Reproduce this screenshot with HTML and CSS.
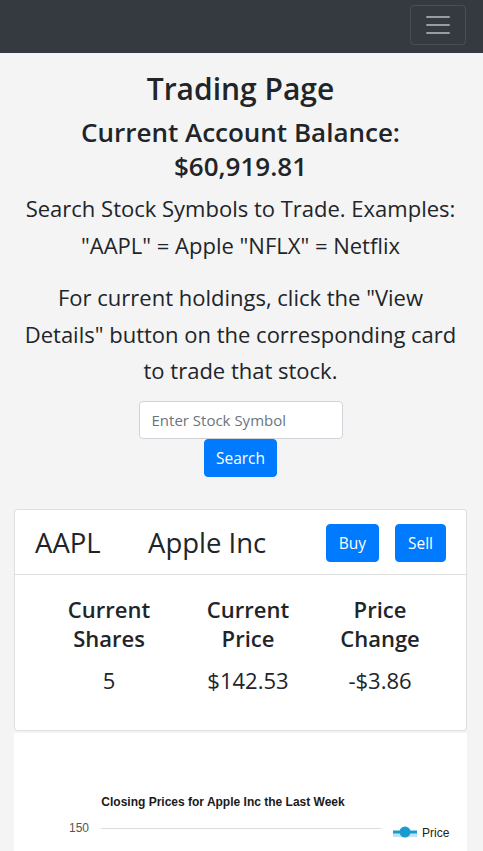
FILE: index.html
```html
<!DOCTYPE html>
<html lang="en">
<head>
<meta charset="utf-8">
<title>Trading Page</title>
<link rel="stylesheet" href="styles.css">
</head>
<body>
<nav class="navbar">
  <button class="toggler" aria-label="Toggle navigation">
    <svg width="30" height="30" viewBox="0 0 30 30"><path d="M4 7h22M4 15h22M4 23h22" stroke="rgba(255,255,255,0.5)" stroke-width="2" stroke-linecap="round" fill="none"/></svg>
  </button>
</nav>
<main class="main">
  <h1 class="title">Trading Page</h1>
  <h3 class="balance">Current Account Balance: $60,919.81</h3>
  <p class="lead">Search Stock Symbols to Trade. Examples: "AAPL" = Apple "NFLX" = Netflix</p>
  <p class="lead lead-2">For current holdings, click the "View Details" button on the corresponding card to trade that stock.</p>
  <form class="search">
    <input class="input" type="text" placeholder="Enter Stock Symbol">
    <button class="btn btn-search" type="button">Search</button>
  </form>

  <section class="card">
    <div class="card-header">
      <span class="sym">AAPL</span>
      <span class="name">Apple Inc</span>
      <div class="actions">
        <button class="btn" type="button">Buy</button>
        <button class="btn" type="button">Sell</button>
      </div>
    </div>
    <div class="card-body">
      <div class="stat">
        <h4 class="stat-label">Current Shares</h4>
        <div class="stat-value">5</div>
      </div>
      <div class="stat">
        <h4 class="stat-label">Current Price</h4>
        <div class="stat-value">$142.53</div>
      </div>
      <div class="stat">
        <h4 class="stat-label">Price Change</h4>
        <div class="stat-value">-$3.86</div>
      </div>
    </div>
  </section>

  <section class="chart">
    <svg class="chart-svg" width="453" height="130" viewBox="0 0 453 130">
      <text x="209" y="73" text-anchor="middle" class="chart-title">Closing Prices for Apple Inc the Last Week</text>
      <text x="75" y="99" text-anchor="end" class="axis">150</text>
      <line x1="87" y1="95.5" x2="367" y2="95.5" stroke="#dcdcdc" stroke-width="1"/>
      <rect x="379" y="100" width="24" height="4" fill="#bfe3f2"/>
      <line x1="379" y1="99" x2="403" y2="99" stroke="#1a9bd0" stroke-width="3"/>
      <circle cx="391" cy="99" r="5.5" fill="#1a9bd0"/>
      <text x="408" y="104" class="legend">Price</text>
    </svg>
  </section>
</main>
</body>
</html>
```
FILE: styles.css
```css
* { box-sizing: border-box; }
html, body { margin: 0; padding: 0; }
body {
  background: #f4f4f4;
  color: #212529;
  font-family: "Open Sans", "Noto Sans", sans-serif;
  font-size: 16px;
  line-height: 1.5;
  overflow: hidden;
}
.navbar {
  background: #343a40;
  height: 53px;
  display: flex;
  justify-content: flex-end;
  align-items: flex-start;
  padding: 5px 17px 0 0;
}
.toggler {
  width: 56px;
  height: 40px;
  background: transparent;
  border: 1px solid rgba(255,255,255,0.1);
  border-radius: 4px;
  display: flex;
  align-items: center;
  justify-content: center;
  padding: 0;
}
.main {
  padding: 0 16px 0 14px;
  text-align: center;
}
.title {
  font-size: 30px;
  font-weight: 600;
  line-height: 1.2;
  margin: 18px 0 8px;
}
.balance {
  font-size: 26px;
  font-weight: 600;
  line-height: 34px;
  margin: 0 0 7px;
  padding: 0 50px;
}
.lead {
  font-size: 22px;
  line-height: 36.5px;
  margin: 0 0 16px;
}
.lead-2 {
  margin: 0 auto 12px;
  max-width: 446px;
}
.search {
  display: flex;
  flex-direction: column;
  align-items: center;
}
.input {
  width: 204px;
  height: 38px;
  border: 1px solid #ced4da;
  border-radius: 4px;
  padding: 6px 12px;
  font-family: inherit;
  font-size: 15px;
  color: #495057;
  background: #fff;
}
.input::placeholder { color: #6c757d; }
.btn {
  background: #007bff;
  color: #fff;
  border: 1px solid #007bff;
  border-radius: 4px;
  height: 38px;
  padding: 0 12px;
  font-family: inherit;
  font-size: 15.5px;
}
.btn-search { padding: 0 11px; }
.card {
  margin-top: 32px;
  background: #fff;
  border: 1px solid rgba(0,0,0,0.125);
  border-radius: 4px;
  text-align: left;
}
.card-header {
  display: flex;
  align-items: center;
  padding: 13px 20px 11px 20px;
  border-bottom: 1px solid rgba(0,0,0,0.125);
}
.sym, .name {
  font-size: 27.5px;
  font-weight: 500;
  line-height: 40px;
}
.sym { width: 113px; }
.actions {
  margin-left: auto;
  display: flex;
  gap: 16px;
}
.card-body {
  display: grid;
  grid-template-columns: 138px 140px 124px;
  padding: 20px 25px 32px;
  text-align: center;
}
.stat-label {
  font-size: 22px;
  font-weight: 600;
  line-height: 29px;
  margin: 0 0 9px;
}
.stat-value {
  font-size: 22px;
  line-height: 36px;
}
.chart {
  margin-top: 2px;
  background: #fff;
  height: 130px;
}
.chart-svg { display: block; }
.chart-title {
  font-family: "Liberation Sans", Arial, sans-serif;
  font-size: 12px;
  font-weight: 700;
  fill: #1a1a1a;
}
.axis {
  font-family: "Liberation Sans", Arial, sans-serif;
  font-size: 12px;
  fill: #555;
}
.legend {
  font-family: "Liberation Sans", Arial, sans-serif;
  font-size: 12px;
  fill: #222;
}
```
